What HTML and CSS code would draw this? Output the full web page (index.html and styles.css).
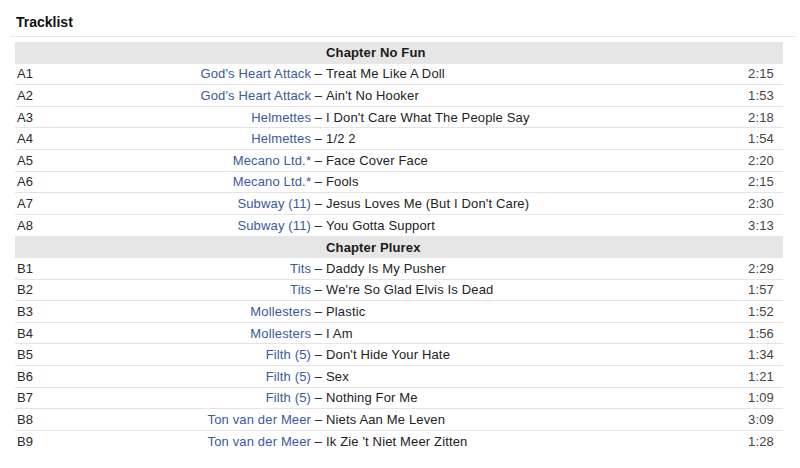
FILE: index.html
```html
<!DOCTYPE html>
<html>
<head>
<meta charset="utf-8">
<link rel="stylesheet" href="styles.css">
</head>
<body>
<div class="section">
  <h2 class="title">Tracklist</h2>
  <div class="tracklist">
    <div class="row heading"><span class="htext">Chapter No Fun</span></div>
    <div class="row"><span class="pos">A1</span><span class="artist"><a href="#">God's Heart Attack</a> –&nbsp;</span><span class="name">Treat Me Like A Doll</span><span class="dur">2:15</span></div>
    <div class="row"><span class="pos">A2</span><span class="artist"><a href="#">God's Heart Attack</a> –&nbsp;</span><span class="name">Ain't No Hooker</span><span class="dur">1:53</span></div>
    <div class="row"><span class="pos">A3</span><span class="artist"><a href="#">Helmettes</a> –&nbsp;</span><span class="name">I Don't Care What The People Say</span><span class="dur">2:18</span></div>
    <div class="row"><span class="pos">A4</span><span class="artist"><a href="#">Helmettes</a> –&nbsp;</span><span class="name">1/2 2</span><span class="dur">1:54</span></div>
    <div class="row"><span class="pos">A5</span><span class="artist"><a href="#">Mecano Ltd.*</a> –&nbsp;</span><span class="name">Face Cover Face</span><span class="dur">2:20</span></div>
    <div class="row"><span class="pos">A6</span><span class="artist"><a href="#">Mecano Ltd.*</a> –&nbsp;</span><span class="name">Fools</span><span class="dur">2:15</span></div>
    <div class="row"><span class="pos">A7</span><span class="artist"><a href="#">Subway (11)</a> –&nbsp;</span><span class="name">Jesus Loves Me (But I Don't Care)</span><span class="dur">2:30</span></div>
    <div class="row last"><span class="pos">A8</span><span class="artist"><a href="#">Subway (11)</a> –&nbsp;</span><span class="name">You Gotta Support</span><span class="dur">3:13</span></div>
    <div class="row heading"><span class="htext">Chapter Plurex</span></div>
    <div class="row"><span class="pos">B1</span><span class="artist"><a href="#">Tits</a> –&nbsp;</span><span class="name">Daddy Is My Pusher</span><span class="dur">2:29</span></div>
    <div class="row"><span class="pos">B2</span><span class="artist"><a href="#">Tits</a> –&nbsp;</span><span class="name">We're So Glad Elvis Is Dead</span><span class="dur">1:57</span></div>
    <div class="row"><span class="pos">B3</span><span class="artist"><a href="#">Mollesters</a> –&nbsp;</span><span class="name">Plastic</span><span class="dur">1:52</span></div>
    <div class="row"><span class="pos">B4</span><span class="artist"><a href="#">Mollesters</a> –&nbsp;</span><span class="name">I Am</span><span class="dur">1:56</span></div>
    <div class="row"><span class="pos">B5</span><span class="artist"><a href="#">Filth (5)</a> –&nbsp;</span><span class="name">Don't Hide Your Hate</span><span class="dur">1:34</span></div>
    <div class="row"><span class="pos">B6</span><span class="artist"><a href="#">Filth (5)</a> –&nbsp;</span><span class="name">Sex</span><span class="dur">1:21</span></div>
    <div class="row"><span class="pos">B7</span><span class="artist"><a href="#">Filth (5)</a> –&nbsp;</span><span class="name">Nothing For Me</span><span class="dur">1:09</span></div>
    <div class="row"><span class="pos">B8</span><span class="artist"><a href="#">Ton van der Meer</a> –&nbsp;</span><span class="name">Niets Aan Me Leven</span><span class="dur">3:09</span></div>
    <div class="row last"><span class="pos">B9</span><span class="artist"><a href="#">Ton van der Meer</a> –&nbsp;</span><span class="name">Ik Zie 't Niet Meer Zitten</span><span class="dur">1:28</span></div>
  </div>
</div>
</body>
</html>
```
FILE: styles.css
```css
html, body {
  margin: 0;
  padding: 0;
  background: #fff;
}
body {
  font-family: "Liberation Sans", Arial, sans-serif;
  font-size: 13px;
  color: #222;
}
.section {
  padding: 14px 4px 0 10px;
}
.title {
  margin: 0;
  padding: 0 0 5px 6px;
  font-size: 14px;
  line-height: 17px;
  font-weight: bold;
  color: #111;
  border-bottom: 1px solid #e9e9e9;
}
.tracklist {
  margin: 5px 0 0 5px;
  width: 768px;
}
.row {
  display: grid;
  grid-template-columns: 60px 251px 1fr 60px;
  align-items: center;
  height: 21.6px;
  box-sizing: border-box;
  border-bottom: 1px solid #e4e4e4;
  line-height: 15px;
  white-space: nowrap;
  letter-spacing: 0.15px;
}
.row.last {
  border-bottom: none;
}
.row.heading {
  background: #e6e6e6;
  border-bottom: none;
  font-weight: bold;
  color: #1a1a1a;
}
.htext {
  grid-column: 3;
}
.pos {
  padding-left: 2px;
  color: #2a2a2a;
}
.artist {
  text-align: right;
  color: #222;
}
.artist a {
  color: #3a5a9c;
  text-decoration: none;
}
.name {
  color: #222;
}
.dur {
  text-align: right;
  padding-right: 9px;
  color: #444;
}
```
